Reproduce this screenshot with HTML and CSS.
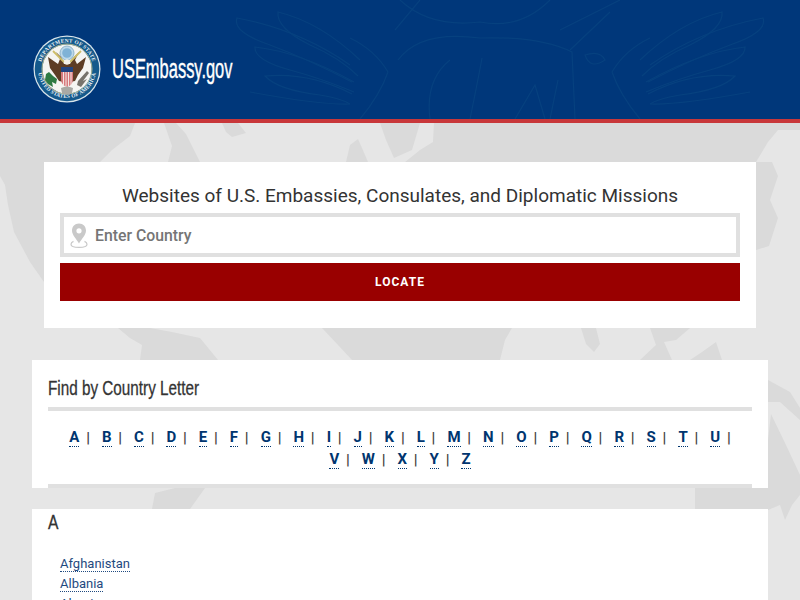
FILE: index.html
```html
<!DOCTYPE html>
<html lang="en">
<head>
<meta charset="utf-8">
<title>USEmbassy.gov</title>
<link rel="stylesheet" href="styles.css">
</head>
<body>
<svg class="map" width="800" height="600" viewBox="0 0 800 600" aria-hidden="true">
  <g class="ocean">
    <path d="M0 123H135L130 136 112 150 100 162H44V282L30 262 14 232 8 205 5 185 0 176Z"/>
    <path d="M164 123H176L186 134 200 162H168L172 146Z"/>
    <path d="M222 123H238L246 133 232 137 226 132Z"/>
    <path d="M346 162L350 145 358 139 362 148 368 162Z"/>
    <path d="M380 123H800V130H778L768 142 756 162H405L420 150 433 142 434 123H420L412 150 394 158 386 140Z"/>
    <path d="M756 162H772L778 176 770 200 778 218 769 246 756 250Z"/>
    <path d="M118 328H150L172 332 200 338 218 360H140L142 345 130 338Z"/>
    <path d="M322 328H512L505 340 500 360H352L338 345Z"/>
    <path d="M581 328H596L600 344 594 352 586 344Z"/>
    <path d="M650 328H690L676 340 664 342 672 360H640L656 345Z"/>
    <path d="M702 352L716 342 722 360H690Z"/>
    <path d="M768 380L790 392 800 408 800 420 780 402 768 402Z"/>
    <path d="M771 414L786 445 800 475V495L792 505 785 520 780 505 768 510H695V488H768V440Z"/>
    <path d="M175 488H205L190 509H152L155 493Z"/>
  </g>
</svg>

<header class="banner">
  <svg class="watermark" width="800" height="119" viewBox="0 0 800 119" aria-hidden="true">
    <g>
      <path d="M640 60Q680 22 722 12Q724 28 690 45Q660 58 642 76"/>
      <path d="M650 65Q700 30 763 18Q768 32 730 45Q690 60 648 82"/>
      <path d="M646 82Q700 52 745 47Q746 60 710 70Q680 78 646 92"/>
      <path d="M648 94Q690 72 735 76Q722 90 680 95Q660 98 650 104"/>
      <path d="M612 72Q625 50 650 38M612 72Q620 95 640 119M650 104Q680 105 750 92"/>
      <path d="M560 30Q580 20 620 0M570 50L610 12M585 55Q600 50 605 60Q590 70 585 55Z"/>
    </g>
    <g transform="matrix(-1 0 0 1 1000 0)">
      <path d="M640 60Q680 22 722 12Q724 28 690 45Q660 58 642 76"/>
      <path d="M650 65Q700 30 763 18Q768 32 730 45Q690 60 648 82"/>
      <path d="M646 82Q700 52 745 47Q746 60 710 70Q680 78 646 92"/>
      <path d="M648 94Q690 72 735 76Q722 90 680 95Q660 98 650 104"/>
      <path d="M612 72Q625 50 650 38M612 72Q620 95 640 119M650 104Q680 105 750 92"/>
    </g>
    <path d="M398 60Q420 30 480 38Q540 36 572 52L575 119M430 119Q425 80 450 60M470 119Q478 80 482 58M515 119L535 85 545 119M550 119L558 80"/>
    <path d="M400 0Q430 28 480 22Q520 30 550 0M395 30L420 0"/>
  </svg>
  <a class="brand" href="#">
    <svg class="seal" width="68" height="68" viewBox="0 0 68 68" role="img" aria-label="Seal of the Department of State">
      <defs>
        <path id="arcTop" d="M7.5 34A26.5 26.5 0 0 1 60.5 34"/>
        <path id="arcBottom" d="M5 34A29 29 0 0 0 63 34"/>
      </defs>
      <circle cx="34" cy="34" r="33.5" fill="#d8e4ea"/>
      <circle cx="34" cy="34" r="32.3" fill="#14598c"/>
      <circle cx="34" cy="34" r="24.5" fill="#f5f5f2"/>
      <circle cx="34" cy="34" r="25" fill="none" stroke="#c9c58e" stroke-width=".8"/>
      <text class="seal-text"><textPath href="#arcTop" startOffset="50%" text-anchor="middle">DEPARTMENT OF STATE</textPath></text>
      <text class="seal-text"><textPath href="#arcBottom" startOffset="50%" text-anchor="middle">UNITED STATES OF AMERICA</textPath></text>
      <circle cx="34" cy="18" r="7" fill="#bcd8ea" stroke="#8fb4cb" stroke-width="1"/>
      <circle cx="34" cy="18" r="4.8" fill="#7fb2d6"/>
      <path d="M15 22L25 29 27 24 23 17 28 22 31 29H37L41 22 46 17 42 25 44 29 53 22 50 33 45 40 42 46 37 47H31L26 46 22 40 17 33Z" fill="#5d3d24"/>
      <path d="M20 16L31 27M48 16L37 27" stroke="#cdbd6a" stroke-width="1.8"/>
      <circle cx="34" cy="27" r="2.8" fill="#f3f1e8"/>
      <path d="M28 35H40V44Q40 50 34 52Q28 50 28 44Z" fill="#d77a7d"/>
      <path d="M28 32H40V37H28Z" fill="#22447f"/>
      <path d="M30.5 37V50M33 37V52M35.5 37V52M38 37V50" stroke="#f4e6e4" stroke-width="1"/>
      <path d="M13 39L16 37 20 41 24 44 23 49 19 47 20 52 15 49 12 45Z" fill="#2e7a42"/>
      <path d="M45 46L54 36 56 38 50 46 54 44 48 52 44 50Z" fill="#77736b"/>
      <path d="M28 53Q34 50 40 53L39 58Q34 61 29 58Z" fill="#a9a9a4"/>
    </svg>
    <span class="brand-name">USEmbassy.gov</span>
  </a>
</header>

<main class="page">
  <section class="locator">
    <h1 class="locator-title">Websites of U.S. Embassies, Consulates, and Diplomatic Missions</h1>
    <div class="search">
      <svg class="pin" width="18" height="25" viewBox="0 0 18 25" aria-hidden="true">
        <path d="M9 0.5C4.8 0.5 2 3.6 2 7.6 2 12 6.4 16.2 9 20.5 11.6 16.2 16 12 16 7.6 16 3.6 13.2 0.5 9 0.5ZM9 5.2A2.6 2.6 0 1 1 9 10.4 2.6 2.6 0 0 1 9 5.2Z" fill="#c9c9c9"/>
        <path d="M3.5 18.4C1.8 19.2 1 20.2 1 21.2 1 23.2 4.6 24.4 9 24.4S17 23.2 17 21.2C17 20.2 16.2 19.2 14.5 18.4" fill="none" stroke="#c9c9c9" stroke-width="1.2"/>
      </svg>
      <span class="placeholder">Enter Country</span>
    </div>
    <button class="locate" type="button">LOCATE</button>
  </section>

  <section class="letters">
    <h2 class="section-title"><span class="condensed">Find by Country Letter</span></h2>
    <nav class="letter-list">
      <span class="letter"><a href="#">A</a><i>|</i></span>
      <span class="letter"><a href="#">B</a><i>|</i></span>
      <span class="letter"><a href="#">C</a><i>|</i></span>
      <span class="letter"><a href="#">D</a><i>|</i></span>
      <span class="letter"><a href="#">E</a><i>|</i></span>
      <span class="letter"><a href="#">F</a><i>|</i></span>
      <span class="letter"><a href="#">G</a><i>|</i></span>
      <span class="letter"><a href="#">H</a><i>|</i></span>
      <span class="letter"><a href="#">I</a><i>|</i></span>
      <span class="letter"><a href="#">J</a><i>|</i></span>
      <span class="letter"><a href="#">K</a><i>|</i></span>
      <span class="letter"><a href="#">L</a><i>|</i></span>
      <span class="letter"><a href="#">M</a><i>|</i></span>
      <span class="letter"><a href="#">N</a><i>|</i></span>
      <span class="letter"><a href="#">O</a><i>|</i></span>
      <span class="letter"><a href="#">P</a><i>|</i></span>
      <span class="letter"><a href="#">Q</a><i>|</i></span>
      <span class="letter"><a href="#">R</a><i>|</i></span>
      <span class="letter"><a href="#">S</a><i>|</i></span>
      <span class="letter"><a href="#">T</a><i>|</i></span>
      <span class="letter"><a href="#">U</a><i>|</i></span>
      <span class="letter"><a href="#">V</a><i>|</i></span>
      <span class="letter"><a href="#">W</a><i>|</i></span>
      <span class="letter"><a href="#">X</a><i>|</i></span>
      <span class="letter"><a href="#">Y</a><i>|</i></span>
      <span class="letter"><a href="#">Z</a></span>
    </nav>
  </section>

  <section class="group">
    <h2 class="group-title"><span class="condensed">A</span></h2>
    <ul class="countries">
      <li><a href="#">Afghanistan</a></li>
      <li><a href="#">Albania</a></li>
      <li><a href="#">Algeria</a></li>
    </ul>
  </section>
</main>
</body>
</html>
```
FILE: styles.css
```css
* { box-sizing: border-box; }
html, body { height: 600px; overflow: hidden; }
body {
  position: relative;
  margin: 0;
  background: #e6e6e6;
  font-family: Roboto, "Liberation Sans", sans-serif;
  color: #333;
}
a { text-decoration: none; }

.map { position: absolute; left: 0; top: 0; }
.ocean { fill: #dadada; }

.banner {
  position: relative;
  height: 123px;
  background: #00377a;
  border-bottom: 4px solid #c8373a;
  display: flex;
  align-items: center;
  padding: 19px 0 0 33px;
}
.watermark {
  position: absolute;
  left: 0;
  top: 0;
  fill: none;
  stroke: #06417f;
  stroke-width: 1.2;
}
.brand { position: relative; display: flex; align-items: center; gap: 11px; }
.seal { display: block; flex: none; }
.seal-text {
  font-family: "Liberation Serif", serif;
  font-size: 5.4px;
  font-weight: 700;
  fill: #eef3f5;
  letter-spacing: .2px;
}
.brand-name {
  display: inline-block;
  font-family: "Liberation Sans", sans-serif;
  font-size: 27px;
  line-height: 32px;
  color: #fff;
  white-space: nowrap;
  -webkit-text-stroke: .4px #fff;
  transform: scaleX(.61);
  transform-origin: left center;
}
.condensed {
  display: inline-block;
  white-space: nowrap;
  -webkit-text-stroke: .3px #333;
  transform: scaleX(.745);
  transform-origin: left center;
}

.page {
  position: relative;
  display: flex;
  flex-direction: column;
  padding: 39px 32px 0;
}

.locator {
  background: #fff;
  margin: 0 12px 32px;
  padding: 21px 16px 27px;
  height: 166px;
}
.locator-title {
  margin: 0 0 5px;
  font-size: 19px;
  font-weight: 400;
  line-height: 25px;
  text-align: center;
  color: #333;
}
.search {
  display: flex;
  align-items: center;
  gap: 7px;
  height: 44px;
  padding-left: 6px;
  border: 4px solid #e0e0e0;
  background: #fff;
}
.pin { flex: none; }
.placeholder { font-size: 15.8px; font-weight: 500; color: #757575; }
.locate {
  display: block;
  width: 100%;
  height: 38px;
  margin-top: 6px;
  border: 0;
  background: #990000;
  color: #fff;
  font-family: Roboto, "Liberation Sans", sans-serif;
  font-size: 12px;
  font-weight: 700;
  letter-spacing: 1px;
}

.letters {
  background: #fff;
  height: 128px;
  margin-bottom: 21px;
  padding: 0 16px;
}
.section-title {
  height: 51px;
  margin: 0;
  padding-top: 14px;
  border-bottom: 4px solid #e0e0e0;
  font-family: "Liberation Sans", sans-serif;
  font-size: 20.5px;
  font-weight: 400;
  line-height: 28px;
  color: #333;
}
.letter-list {
  display: flex;
  flex-wrap: wrap;
  justify-content: center;
  align-content: flex-start;
  height: 77px;
  padding: 16px 12px 0;
  border-bottom: 4px solid #e0e0e0;
}
.letter {
  display: flex;
  align-items: center;
  height: 22px;
  margin: 0 6px;
  font-size: 15px;
  line-height: 18px;
}
.letter a {
  font-weight: 700;
  color: #00356f;
  border-bottom: 1px dotted #00356f;
  line-height: 17px;
}
.letter i {
  margin-left: 6.8px;
  font-style: normal;
  font-weight: 700;
  font-size: 15px;
  color: #444;
}

.group {
  background: #fff;
  flex: 1;
  height: 200px;
  padding: 0 16px;
}
.group-title {
  margin: 0;
  height: 40px;
  font-family: "Liberation Sans", sans-serif;
  font-size: 21px;
  font-weight: 400;
  line-height: 26px;
  color: #333;
}
.countries {
  margin: 0;
  padding: 5px 0 0 12px;
  list-style: none;
  font-size: 13px;
  line-height: 20px;
}
.countries a {
  color: #1f4a80;
  border-bottom: 1px dotted #1f4a80;
}
```
